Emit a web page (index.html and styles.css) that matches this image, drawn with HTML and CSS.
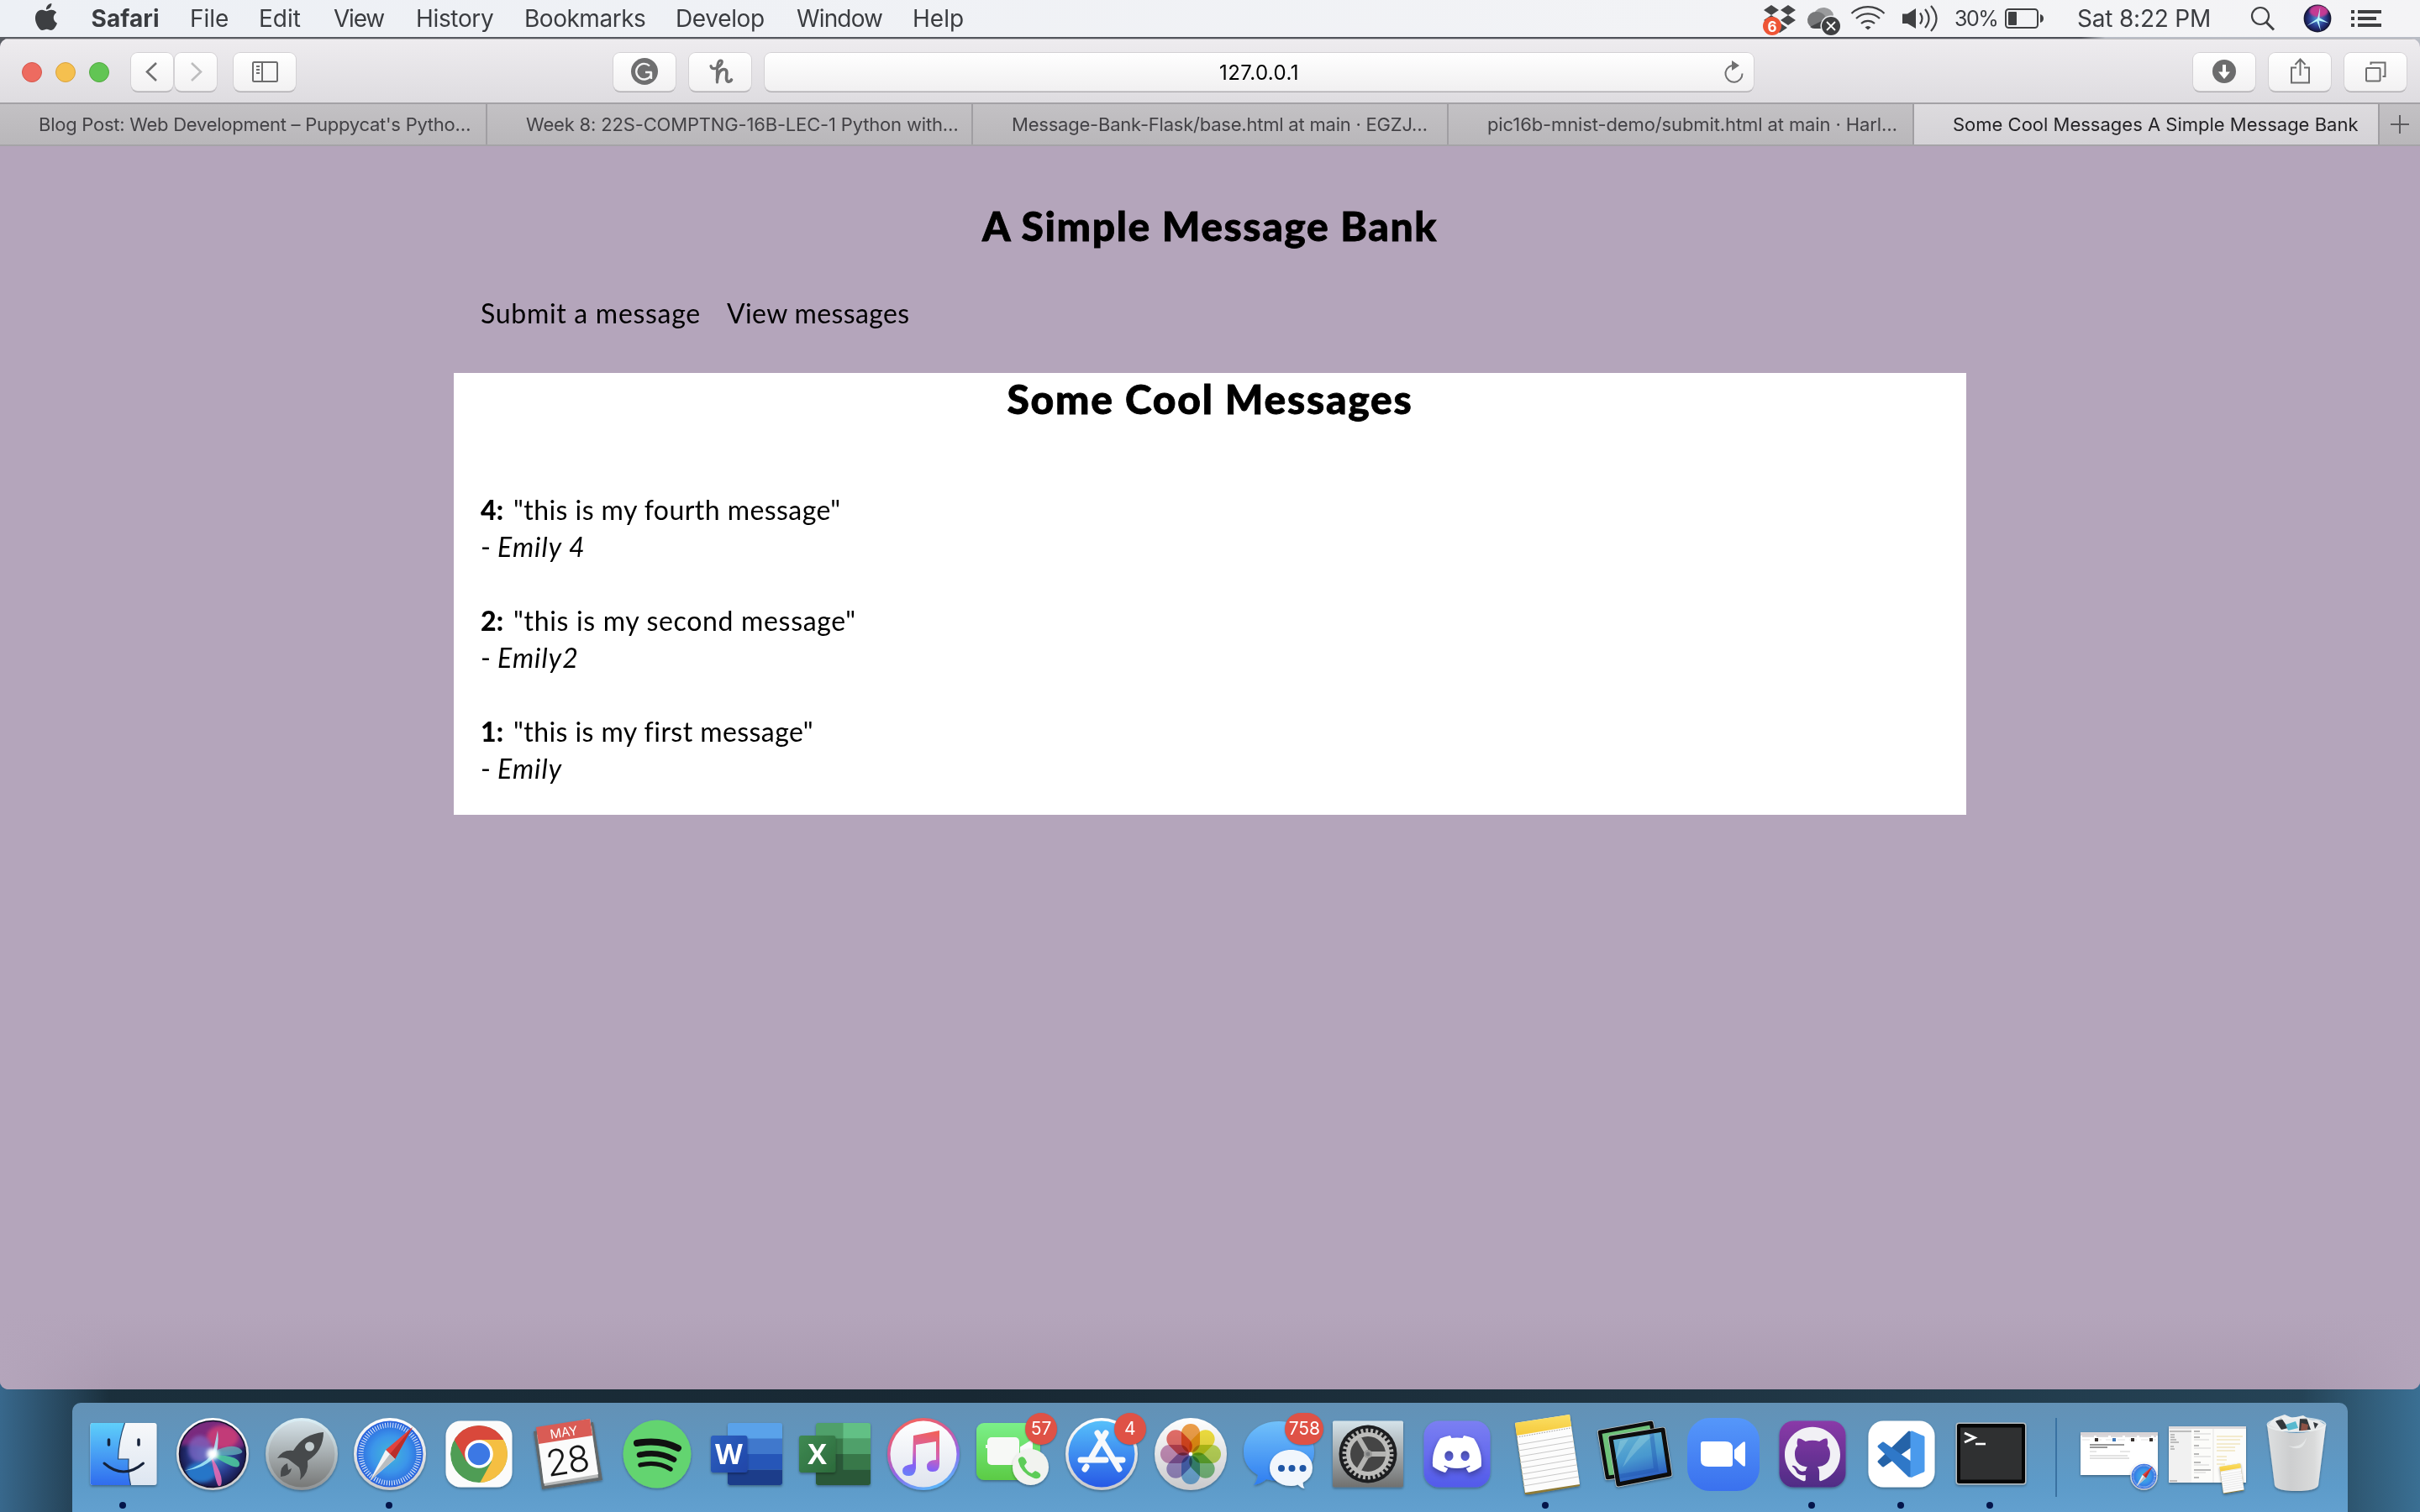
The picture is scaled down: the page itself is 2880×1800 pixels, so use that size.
FILE: index.html
```
<!DOCTYPE html>
<html lang="en">
<head>
<meta charset="utf-8">
<title>Some Cool Messages A Simple Message Bank</title>
<link rel="stylesheet" href="styles.css">
</head>
<body>
<svg class="defs" width="0" height="0" aria-hidden="true">
  <defs>
    <linearGradient id="rim" x2="0" y2="1"><stop offset="0" stop-color="#fff"/><stop offset="1" stop-color="#c9c9cb"/></linearGradient>
    <linearGradient id="finderBlue" x2="0" y2="1"><stop offset="0" stop-color="#5fd0fa"/><stop offset="1" stop-color="#2f6cee"/></linearGradient>
    <linearGradient id="finderWhite" x2="0" y2="1"><stop offset="0" stop-color="#f7f8fa"/><stop offset="1" stop-color="#dde6f1"/></linearGradient>
    <radialGradient id="siriBase" cx=".5" cy=".5" r=".55"><stop offset="0" stop-color="#4a9fd8"/><stop offset=".55" stop-color="#2b3f92"/><stop offset="1" stop-color="#120f38"/></radialGradient>
    <linearGradient id="rocket" x2="0" y2="1"><stop offset="0" stop-color="#d5e2e8"/><stop offset="1" stop-color="#777877"/></linearGradient>
    <linearGradient id="rocketRim" x2="0" y2="1"><stop offset="0" stop-color="#dcf0f7"/><stop offset="1" stop-color="#8f9294"/></linearGradient>
    <radialGradient id="compass"><stop offset="0" stop-color="#43b6d8"/><stop offset=".55" stop-color="#3b95ea"/><stop offset="1" stop-color="#2a62dc"/></radialGradient>
    <linearGradient id="wordTile" x2="1" y2="1"><stop offset="0" stop-color="#2f62c0"/><stop offset="1" stop-color="#1f45a8"/></linearGradient>
    <linearGradient id="excelTile" x2="1" y2="1"><stop offset="0" stop-color="#3f8a53"/><stop offset="1" stop-color="#2c6a3b"/></linearGradient>
    <linearGradient id="tunesRing" x1=".3" y1="0" x2=".7" y2="1"><stop offset="0" stop-color="#f5645a"/><stop offset=".35" stop-color="#d05aa0"/><stop offset=".65" stop-color="#8a6af0"/><stop offset="1" stop-color="#55c0fa"/></linearGradient>
    <linearGradient id="tunesNote" x1=".6" y1="0" x2=".4" y2="1"><stop offset="0" stop-color="#f0605c"/><stop offset=".5" stop-color="#d361b4"/><stop offset=".8" stop-color="#8462f5"/><stop offset="1" stop-color="#6a7cf8"/></linearGradient>
    <linearGradient id="tunesFace" x2="0" y2="1"><stop offset="0" stop-color="#fff"/><stop offset="1" stop-color="#dfe4ee"/></linearGradient>
    <linearGradient id="facetime" x2="0" y2="1"><stop offset="0" stop-color="#7bf089"/><stop offset="1" stop-color="#5bcb45"/></linearGradient>
    <linearGradient id="store" x2="0" y2="1"><stop offset="0" stop-color="#56c0fa"/><stop offset="1" stop-color="#2759e6"/></linearGradient>
    <linearGradient id="bubble" x2="0" y2="1"><stop offset="0" stop-color="#71c1fa"/><stop offset="1" stop-color="#2f7df0"/></linearGradient>
    <linearGradient id="prefs" x2="0" y2="1"><stop offset="0" stop-color="#d5e3ea"/><stop offset="1" stop-color="#70706f"/></linearGradient>
    <linearGradient id="discord" x2="0" y2="1"><stop offset="0" stop-color="#7b7ff2"/><stop offset="1" stop-color="#525aea"/></linearGradient>
    <linearGradient id="notesTop" x2="0" y2="1"><stop offset="0" stop-color="#fbdf64"/><stop offset="1" stop-color="#f5c93a"/></linearGradient>
    <linearGradient id="screen" x2=".3" y2="1"><stop offset="0" stop-color="#6bb9d2"/><stop offset=".6" stop-color="#4898cf"/><stop offset="1" stop-color="#2a5cc0"/></linearGradient>
    <linearGradient id="zoomBlue" x2="0" y2="1"><stop offset="0" stop-color="#5597fa"/><stop offset="1" stop-color="#3a71ee"/></linearGradient>
    <linearGradient id="github" x2="0" y2="1"><stop offset="0" stop-color="#8a3aa8"/><stop offset="1" stop-color="#4f2c85"/></linearGradient>
    <linearGradient id="can" x2="1"><stop offset="0" stop-color="#dddfe0"/><stop offset=".4" stop-color="#cdcecf"/><stop offset=".8" stop-color="#d9dada"/><stop offset="1" stop-color="#eff0f1"/></linearGradient>
    <filter id="soft" x="-50%" y="-50%" width="200%" height="200%"><feGaussianBlur stdDeviation="2.2"/></filter>
    <filter id="drop" x="-20%" y="-20%" width="140%" height="150%"><feDropShadow dx="0" dy="1.5" stdDeviation="1.5" flood-opacity=".35"/></filter>
    <clipPath id="siriClip"><circle r="39.5"/></clipPath>
    <clipPath id="chromeClip"><circle r="34"/></clipPath>
    <symbol id="compassIcon" viewBox="-44 -44 88 88">
      <circle r="43" fill="url(#rim)"/><circle r="39.5" fill="url(#compass)"/>
      <circle r="34.5" fill="none" stroke="#fff" stroke-opacity=".85" stroke-width="6" stroke-dasharray="1 2.01"/>
      <path d="M27-32L6 6-5-5z" fill="#e2433c"/><path d="M27-32L6 6 0 0z" fill="#bb2f2c"/>
      <path d="M-24 32L-5-5 6 6z" fill="#f4f4f4"/><path d="M-24 32L0 0 6 6z" fill="#b9bdc0"/>
    </symbol>
    <symbol id="notesIcon" viewBox="-41 -47 82 94">
      <path d="M-37-36L28-47 40 38-25 49z" fill="#8f7a35"/>
      <path d="M-37-37L28-47 40 36-25 46z" fill="#fcfcfc"/>
      <path d="M-37-37L28-47 30-33-35-22z" fill="url(#notesTop)"/>
      <path d="M-35-20L29-31" stroke="#999" stroke-dasharray="1.5 1.5"/>
      <path d="M-34-11L31-22M-33-4L32-15M-32 3L33-8M-31 10L34-1M-30 17L35 6M-29 24L36 13M-28 31L37 20M-27 38L38 27" stroke="#c9c9c9" stroke-width="1"/>
    </symbol>
  </defs>
</svg>

<header class="menubar">
  <svg class="apple" viewBox="0 0 24 24"><path fill="#3d3f42" d="M12.152 6.896c-.948 0-2.415-1.078-3.96-1.04-2.04.027-3.91 1.183-4.961 3.014-2.117 3.675-.546 9.103 1.519 12.09 1.013 1.454 2.208 3.09 3.792 3.039 1.52-.065 2.09-.987 3.935-.987 1.831 0 2.35.987 3.96.948 1.637-.026 2.676-1.48 3.676-2.948 1.156-1.688 1.636-3.325 1.662-3.415-.039-.013-3.182-1.221-3.22-4.857-.026-3.04 2.48-4.494 2.597-4.559-1.429-2.09-3.623-2.324-4.39-2.376-2-.156-3.675 1.09-4.61 1.09zM15.53 3.83c.843-1.012 1.4-2.427 1.245-3.83-1.207.052-2.662.805-3.532 1.818-.78.896-1.454 2.338-1.273 3.714 1.338.104 2.715-.688 3.559-1.701"/></svg>
  <span class="app-name">Safari</span>
  <span>File</span>
  <span>Edit</span>
  <span class="menu-view">View</span>
  <span class="menu-history">History</span>
  <span class="menu-bookmarks">Bookmarks</span>
  <span class="menu-develop">Develop</span>
  <span class="menu-window">Window</span>
  <span>Help</span>
  <svg width="40" height="44" viewBox="0 0 40 44"><path fill="#454648" d="M10 6l9 6-9 6-9-6zM30 6l9 6-9 6-9-6zM10 18l9 6-9 6-9-6zM30 18l9 6-9 6-9-6zM20 27l9 6-9 6-9-6z"/><circle cx="11" cy="31" r="11" fill="#ee5536"/><text x="11" y="37.500" class="tiny-badge">6</text></svg>
  <svg width="42" height="44" viewBox="0 0 42 44"><path d="M10 16a12 11 0 0 1 23 2l-8 10z" fill="#9a9b9d"/><path d="M11 34a10 10 0 1 1 2-20q6 0 10 5l6 15z" fill="#77787a"/><path d="M5 32l22-11 6 13H11q-4 0-6-2z" fill="#454648"/><circle cx="30" cy="31" r="12.500" fill="#f2f3f6"/><circle cx="30" cy="31" r="11" fill="#3f4042"/><path d="M25 26l10 10M35 26L25 36" stroke="#fff" stroke-width="1.800"/></svg>
  <svg width="42" height="44" viewBox="0 0 42 44" fill="none" stroke="#3f4042" stroke-width="2.200"><path d="M1.500 16a28 28 0 0 1 39 0M7 22a20 20 0 0 1 28 0M13 28a12 12 0 0 1 16 0"/><path d="M17.500 32.500q3.500-3 7 0L21 35.500z" fill="#3f4042" stroke="none"/></svg>
  <svg width="44" height="44" viewBox="0 0 44 44"><path d="M1 16.500h6L17 10v24L7 28H1z" fill="#3f4042"/><path d="M22 15.500q5 6.500 0 13M28 11q9 11 0 22M35 7q13 15 0 30" fill="none" stroke="#3f4042" stroke-width="2.200"/></svg>
  <span class="charge">30%</span>
  <svg width="48" height="44" viewBox="0 0 48 44"><rect x="2" y="11" width="38" height="22" rx="3.500" fill="none" stroke="#3f4042" stroke-width="2"/><rect x="5" y="14" width="10" height="16" rx="1" fill="#3f4042"/><path d="M43 17q4 1 4 5t-4 5z" fill="#3f4042"/></svg>
  <span class="clock">Sat 8:22 PM</span>
  <svg width="30" height="44" viewBox="0 0 30 44" fill="none" stroke="#3f4042"><circle cx="12" cy="19" r="10" stroke-width="2.200"/><path d="M19 26.500l9 9" stroke-width="3"/></svg>
  <svg width="34" height="44" viewBox="-17 -22 34 44"><g transform="scale(.4)"><circle r="41" fill="#15172e"/><g clip-path="url(#siriClip)"><circle r="38" fill="url(#siriBase)"/><ellipse cx="4" cy="-22" rx="28" ry="18" fill="#c43b93" filter="url(#soft)"/><path d="M-32 22L0 0 8-34 6-2 34 14 4 6 10 38-2 8z" fill="#b9f4fa"/></g></g></svg>
  <svg width="38" height="44" viewBox="0 0 38 44"><path d="M1 14h4M9 14h28M1 22h4M9 22h22M1 30h4M9 30h28" stroke="#3f4042" stroke-width="4"/></svg>
</header>

<main class="window">
  <div class="toolbar">
    <div class="lights"><i class="light red"></i><i class="light yellow"></i><i class="light green"></i></div>
    <div class="history-buttons">
      <div class="button narrow"><svg width="50" height="44" viewBox="0 0 50 44"><path d="M30 12L19 22.500 30 33" fill="none" stroke="#6f6f70" stroke-width="2.600"/></svg></div>
      <div class="button narrow"><svg width="50" height="44" viewBox="0 0 50 44"><path d="M20 12l11 10.500L20 33" fill="none" stroke="#bdbdbe" stroke-width="2.600"/></svg></div>
    </div>
    <div class="button"><svg width="74" height="44" viewBox="0 0 74 44" fill="none" stroke="#6c6c6d" stroke-width="2"><rect x="23" y="11" width="29" height="23" rx="1.500"/><path d="M34 11v23M27 16h4M27 20h4M27 24h4"/></svg></div>
    <div class="spacer left"></div>
    <div class="button"><svg width="74" height="44" viewBox="0 0 74 44"><circle cx="37" cy="22" r="16" fill="#6f6f70"/><path d="M43 15.500a9.300 9.300 0 1 0 1.500 11.500V23H38M45 23v8" fill="none" stroke="#f5f5f5" stroke-width="2.400"/></svg></div>
    <div class="button"><svg width="74" height="44" viewBox="0 0 74 44" fill="none" stroke="#6f6f70" stroke-linecap="round" stroke-linejoin="round"><path d="M26 15.500c1 5 7 3.500 10.500 0 3.500-3 3.500-6.500 1-6.500-3.500 0-4 6-4 13V35" stroke-width="3.200"/><path d="M33.500 32c1-8 4-12.500 8-12.500 5 0 3 6 3 10.500 0 5 4 5.500 6 2" stroke-width="3.600"/></svg></div>
    <div class="address"><span>127.0.0.1</span><svg width="30" height="44" viewBox="0 0 30 44"><path d="M13 13a10 10 0 1 0 12.500 9.500" fill="none" stroke="#707071" stroke-width="2"/><path d="M13 7l9 6-9 6z" fill="#707071"/></svg></div>
    <div class="spacer right"></div>
    <div class="button"><svg width="74" height="44" viewBox="0 0 74 44"><circle cx="37" cy="22" r="14" fill="#6c6c6d"/><path d="M37 14v12" stroke="#fff" stroke-width="4"/><path d="M30 22.500h14L37 31z" fill="#fff"/></svg></div>
    <div class="button"><svg width="74" height="44" viewBox="0 0 74 44" fill="none" stroke="#6c6c6d" stroke-width="2"><path d="M33 17.500h-6v18h21v-18h-6M37.500 27V8M31.500 14l6-6.500 6 6.500"/></svg></div>
    <div class="button"><svg width="74" height="44" viewBox="0 0 74 44" fill="none" stroke="#6c6c6d" stroke-width="2"><rect x="26" y="18" width="16.500" height="15.500" rx="1"/><path d="M31.500 14v-2.500h17V28h-3"/></svg></div>
  </div>

  <nav class="tabs">
    <div class="tab t1">Blog Post: Web Development – Puppycat's Pytho…</div>
    <div class="tab t2">Week 8: 22S-COMPTNG-16B-LEC-1 Python with…</div>
    <div class="tab t3">Message-Bank-Flask/base.html at main · EGZJ…</div>
    <div class="tab t4">pic16b-mnist-demo/submit.html at main · Harl…</div>
    <div class="tab active">Some Cool Messages A Simple Message Bank</div>
    <div class="new-tab"><svg width="26" height="26" viewBox="0 0 26 26"><path d="M13 2v22M2 13h22" stroke="#5c5b5e" stroke-width="2"/></svg></div>
  </nav>

  <article class="page">
    <h1>A Simple Message Bank</h1>
    <div class="links"><a class="submit">Submit a message</a><a class="view">View messages</a></div>
    <section class="card">
      <h2>Some Cool Messages</h2>
      <div class="messages">
        <div class="message"><p class="m4"><b>4:</b>"this is my fourth message"</p><p>- <em>Emily 4</em></p></div>
        <div class="message"><p class="m2"><b>2:</b>"this is my second message"</p><p>- <em>Emily2</em></p></div>
        <div class="message"><p class="m1"><b>1:</b>"this is my first message"</p><p>- <em>Emily</em></p></div>
      </div>
    </section>
  </article>
</main>

<footer class="dock">
  <div class="slot running"><svg viewBox="-53 -61 106 130"><g filter="url(#drop)"><rect x="-39.500" y="-37" width="79" height="74" rx="3" fill="url(#finderWhite)"/><path d="M-36.500-37H1.500Q-6-16-6.500 6H6Q5 22 8.500 37h-45a3 3 0 0 1-3-3v-68a3 3 0 0 1 3-3z" fill="url(#finderBlue)"/></g><path d="M1.500-37Q-6-16-6.500 6H6Q5 22 8.500 37" fill="none" stroke="#24476f" stroke-width="1.200"/><path d="M-17.500-17v6M18-17v6" stroke="#15223a" stroke-width="3.500" stroke-linecap="round"/><path d="M-23 11Q0 31 23.500 11" fill="none" stroke="#15223a" stroke-width="3" stroke-linecap="round"/></svg></div>
  <div class="slot"><svg viewBox="-53 -61 106 130"><circle r="43" fill="url(#rim)" filter="url(#drop)"/><g clip-path="url(#siriClip)"><circle r="39.500" fill="url(#siriBase)"/><path d="M-39-10A40 40 0 0 1 39-10Q20 0 0-6T-39-10z" fill="#7a2a7e" filter="url(#soft)"/><ellipse cx="12" cy="-20" rx="19" ry="14" fill="#c23a78" filter="url(#soft)"/><ellipse cx="-15" cy="-6" rx="14" ry="16" fill="#8267c4" opacity=".7" filter="url(#soft)"/><ellipse cx="-14" cy="22" rx="18" ry="12" fill="#2876c8" filter="url(#soft)"/><path d="M0-2Q22-14 33-6T4 2z" fill="#62aeb9" opacity=".8"/><path d="M2 1Q32 2 32 12T2 3z" fill="#4cc79c" opacity=".9"/><path d="M-2 2Q14 26 10 37T-2 2z" fill="#e46bb4" opacity=".9"/><path d="M-34 20Q-12 14 0 0 4-18 6-28 8-12 4 0-4 16-34 20z" fill="#a8effa" opacity=".85"/><circle r="7" fill="#fff" filter="url(#soft)"/></g><circle r="39.500" fill="none" stroke="#14102c" stroke-width="1.500"/></svg></div>
  <div class="slot"><svg viewBox="-53 -61 106 130"><circle r="43" fill="url(#rocketRim)" filter="url(#drop)"/><circle r="39.500" fill="url(#rocket)"/><path d="M26-26Q2-24-10-4-22-6-29 5-22 3-16 6l13 10Q0 24-2 31 9 22 7 8 26-4 26-26z" fill="#46494b"/><circle cx="9.500" cy="-9" r="5.500" fill="#c3cdd0"/><path d="M-17 11Q-26 14-25 27-13 26-12 17l-4 2z" fill="#46494b"/></svg></div>
  <div class="slot running"><svg viewBox="-53 -61 106 130"><use href="#compassIcon" x="-44" y="-44" width="88" height="88" filter="url(#drop)"/></svg></div>
  <div class="slot"><svg viewBox="-53 -61 106 130"><rect x="-39.500" y="-39.500" width="79" height="79" rx="18" fill="#fbfbfb" filter="url(#drop)"/><g clip-path="url(#chromeClip)"><circle r="34" fill="#4f9d55"/><path d="M-40-40H40V-17H0L-15 9-31-20z" fill="#d9483b"/><path d="M0-17H40V40H-2L15 9z" fill="#f5bf42"/></g><circle r="16.800" fill="#fff"/><circle r="13.200" fill="#3c78e4"/></svg></div>
  <div class="slot"><svg viewBox="-53 -61 106 130"><g filter="url(#drop)"><path d="M-41-27L30-38 41 31-31 42z" fill="#62676a"/><path d="M-37-23L28-33 36 28-28 38z" fill="#b9bbbb"/><path d="M-37-30L26-42 36 24-29 35z" fill="#fbfbfb"/><path d="M-38-32L26-42 29-22-35-12z" fill="#d95c55"/></g><g transform="rotate(-9)" text-anchor="middle"><text class="cal-month" x="-1" y="-21">MAY</text><text class="cal-day" x="-2" y="23">28</text></g></svg></div>
  <div class="slot"><svg viewBox="-53 -61 106 130"><circle r="40.500" fill="#64d470" filter="url(#drop)"/><g fill="none" stroke="#111" stroke-linecap="round"><path d="M-24-13Q4-18 25-7" stroke-width="8"/><path d="M-21 1Q2-4 20 6.500" stroke-width="6.600"/><path d="M-20 13Q0 8 16 18" stroke-width="5.400"/></g></svg></div>
  <div class="slot"><svg viewBox="-53 -61 106 130"><g filter="url(#drop)"><rect x="-22" y="-37" width="65" height="74" rx="3" fill="#5aa2ea"/><path d="M-22-18.500h65V0h-65z" fill="#3f78cc"/><path d="M-22 0h65v18.500h-65z" fill="#2857b8"/><path d="M-22 18.500h65V34a3 3 0 0 1-3 3h-59a3 3 0 0 1-3-3z" fill="#1c3d8a"/></g><rect x="-42" y="-22" width="43.500" height="44" rx="3" fill="url(#wordTile)" filter="url(#drop)"/><text class="office" x="-20.500" y="12">W</text></svg></div>
  <div class="slot"><svg viewBox="-53 -61 106 130"><g filter="url(#drop)"><rect x="-22" y="-37" width="65" height="74" rx="3" fill="#4fa06a"/><path d="M10.500-37H40a3 3 0 0 1 3 3v15.500H10.500z" fill="#62c085"/><path d="M-22-18.500h32.500V18.500H-22z" fill="#37784a"/><path d="M10.500-18.500H43V0H10.500z" fill="#4fa06a"/><path d="M10.500 0H43v18.500H10.500z" fill="#37784a"/><path d="M-22 18.500h65V34a3 3 0 0 1-3 3h-59a3 3 0 0 1-3-3z" fill="#2b5838"/><path d="M-22 0h32.500v20H-22z" fill="#2b5838"/></g><rect x="-42" y="-22" width="43.500" height="44" rx="3" fill="url(#excelTile)" filter="url(#drop)"/><text class="office" x="-20.500" y="12">X</text></svg></div>
  <div class="slot"><svg viewBox="-53 -61 106 130"><circle r="43" fill="url(#tunesRing)" filter="url(#drop)"/><circle r="39.500" fill="url(#tunesFace)"/><path d="M-12-22L19-28V12q0 9-8 9-7 0-7-6 0-8 11-8V-15l-24 4V17q-1 9-8 9-8 0-8-6 0-7 12-8z" fill="url(#tunesNote)"/></svg></div>
  <div class="slot"><svg viewBox="-53 -61 106 130"><rect x="-43" y="-37" width="76" height="68" rx="9" fill="url(#facetime)" filter="url(#drop)"/><path d="M-31-11v4M10-8L23-16V10L10 2z" fill="#fafafa" stroke="#fafafa" stroke-width="2"/><rect x="-30" y="-20" width="38" height="33" rx="5" fill="#f7f9f6"/><circle cx="21.500" cy="15.500" r="21.500" fill="#f1f3ef" filter="url(#drop)"/><path d="M9 4q5-3 8 6l-3 4q3 7 9 9l4-3q8 3 6 7-3 4-9 1-14-6-17-19-1-3 2-5z" fill="#5dcc58"/></svg><span class="badge">57</span></div>
  <div class="slot"><svg viewBox="-53 -61 106 130"><circle r="43" fill="url(#rim)" filter="url(#drop)"/><circle r="39.500" fill="url(#store)"/><g stroke="#f7f9fb" stroke-width="7" stroke-linecap="round"><path d="M-25 7H5M17 7h8M-5-25L21 18M5-25L-12 4M-18 15l-2 3"/></g></svg><span class="badge">4</span></div>
  <div class="slot"><svg viewBox="-53 -61 106 130"><circle r="43" fill="url(#rim)" filter="url(#drop)"/><g class="petals"><rect x="-11" y="-36" width="22" height="34" rx="11" fill="#f0a04a"/><rect x="-11" y="-36" width="22" height="34" rx="11" fill="#f3e240" transform="rotate(45)"/><rect x="-11" y="-36" width="22" height="34" rx="11" fill="#c0dc5a" transform="rotate(90)"/><rect x="-11" y="-36" width="22" height="34" rx="11" fill="#7fc684" transform="rotate(135)"/><rect x="-11" y="-36" width="22" height="34" rx="11" fill="#76b6e6" transform="rotate(180)"/><rect x="-11" y="-36" width="22" height="34" rx="11" fill="#a192cc" transform="rotate(225)"/><rect x="-11" y="-36" width="22" height="34" rx="11" fill="#cb93bd" transform="rotate(270)"/><rect x="-11" y="-36" width="22" height="34" rx="11" fill="#e8706a" transform="rotate(315)"/></g><circle r="2" fill="#fff"/></svg></div>
  <div class="slot"><svg viewBox="-53 -61 106 130"><path d="M0-39C-24-39-42-23-42-3q0 18 17 28-1 7-5 12 10-2 15-7 7 2 15 2c24 0 42-15 42-35S24-39 0-39z" fill="url(#bubble)" filter="url(#drop)"/><path d="M14.500-5C-1-5-11 5-11 16.500S0 38 14.500 38q4 0 8-1.500 4 4 8 4.500-2-3-2-7Q40 28 40 16.500C40 4 29-5 14.500-5z" fill="#f1f6fc" filter="url(#drop)"/><g fill="#1f56a5"><circle cx="3" cy="17" r="4"/><circle cx="15.500" cy="17" r="4"/><circle cx="28.500" cy="17" r="4"/></g></svg><span class="badge wide">758</span></div>
  <div class="slot"><svg viewBox="-53 -61 106 130"><rect x="-42" y="-39.500" width="84" height="79" rx="2" fill="url(#prefs)" filter="url(#drop)"/><circle r="34.500" fill="#1d1e20"/><circle r="28" fill="none" stroke="#b4b4b2" stroke-width="5" stroke-dasharray="3 2.864"/><circle r="23.500" fill="#454545" stroke="#bdbdbb" stroke-width="5"/><path d="M0 0H22M0 0L-11-19M0 0L-11 19" stroke="#b4b4b2" stroke-width="6"/><circle r="5" fill="#9b9b99"/><circle r="2.500" fill="#77797a"/></svg></div>
  <div class="slot"><svg viewBox="-53 -61 106 130"><rect x="-39.500" y="-39.500" width="79" height="79" rx="18" fill="url(#discord)" filter="url(#drop)"/><path transform="translate(-29 -29) scale(2.417)" fill="#fff" filter="url(#drop)" d="M20.317 4.370a19.791 19.791 0 00-4.885-1.515.074.074 0 00-.079.037c-.211.375-.445.865-.608 1.250-1.845-.276-3.680-.276-5.487 0-.164-.393-.406-.874-.618-1.250a.077.077 0 00-.079-.037 19.736 19.736 0 00-4.885 1.515.070.070 0 00-.032.028C.533 9.046-.319 13.580.099 18.058a.082.082 0 00.031.056c2.053 1.508 4.041 2.423 5.993 3.029a.078.078 0 00.084-.028c.462-.630.873-1.295 1.226-1.994a.076.076 0 00-.042-.106c-.653-.248-1.274-.550-1.872-.892a.077.077 0 01-.008-.128c.126-.094.252-.192.372-.291a.074.074 0 01.078-.011c3.928 1.793 8.180 1.793 12.061 0a.074.074 0 01.079.010c.120.099.246.198.373.292a.077.077 0 01-.007.128 12.299 12.299 0 01-1.873.891.077.077 0 00-.041.107c.360.698.772 1.363 1.225 1.993a.076.076 0 00.084.029c1.961-.607 3.950-1.522 6.002-3.029a.077.077 0 00.031-.055c.500-5.177-.838-9.674-3.549-13.660a.061.061 0 00-.031-.029zM8.020 15.331c-1.183 0-2.157-1.086-2.157-2.419 0-1.333.956-2.419 2.157-2.419 1.211 0 2.176 1.095 2.157 2.419 0 1.333-.956 2.419-2.157 2.419zm7.975 0c-1.183 0-2.157-1.086-2.157-2.419 0-1.333.955-2.419 2.157-2.419 1.211 0 2.176 1.095 2.157 2.419 0 1.333-.946 2.419-2.157 2.419z"/></svg></div>
  <div class="slot running"><svg viewBox="-53 -61 106 130"><use href="#notesIcon" x="-41" y="-48" width="82" height="96" filter="url(#drop)"/></svg></div>
  <div class="slot"><svg viewBox="-53 -61 106 130"><g filter="url(#drop)" stroke-linejoin="round"><path d="M-42-26L19-37 30 19-33 28z" fill="#6ec27a" stroke="#bfc5c5" stroke-width="6"/><path d="M-42-26L19-37 30 19-33 28z" fill="#6ec27a" stroke="#0c0c0c" stroke-width="4.500"/><path d="M-29-19L33-29 41 24-20 36z" fill="url(#screen)" stroke="#bfc5c5" stroke-width="6.500"/><path d="M-29-19L33-29 41 24-20 36z" fill="url(#screen)" stroke="#0c0c0c" stroke-width="5"/></g><path d="M-15 16Q2-6 23-24L6-21Q-8-4-15 16zM-18-16L-24 8-8-18z" fill="#b4e6e4" opacity=".3"/><path d="M22-25l6 46-46 8-1-5 41-7-5-41z" fill="#1e4fae" opacity=".4"/></svg></div>
  <div class="slot"><svg viewBox="-53 -61 106 130"><rect x="-43" y="-43" width="86" height="87" rx="27" fill="url(#zoomBlue)"/><path d="M-27-12q0-3 3-3H2q9 0 9 8V12q0 3-3 3H-18q-9 0-9-8zM13-5L23-14q3-2 3 1V13q0 3-3 1L13 5z" fill="#fff"/></svg></div>
  <div class="slot running"><svg viewBox="-53 -61 106 130"><rect x="-39.500" y="-39.500" width="79" height="79" rx="17" fill="url(#github)" filter="url(#drop)"/><path transform="translate(-33 -33) scale(2.750)" fill="#f1f0f5" d="M12 .297c-6.630 0-12 5.373-12 12 0 5.303 3.438 9.800 8.205 11.385.600.113.820-.258.820-.577 0-.285-.010-1.040-.015-2.040-3.338.724-4.042-1.610-4.042-1.610C4.422 18.070 3.633 17.700 3.633 17.700c-1.087-.744.084-.729.084-.729 1.205.084 1.838 1.236 1.838 1.236 1.070 1.835 2.809 1.305 3.495.998.108-.776.417-1.305.760-1.605-2.665-.300-5.466-1.332-5.466-5.930 0-1.310.465-2.380 1.235-3.220-.135-.303-.540-1.523.105-3.176 0 0 1.005-.322 3.300 1.230.960-.267 1.980-.399 3-.405 1.020.006 2.040.138 3 .405 2.280-1.552 3.285-1.230 3.285-1.230.645 1.653.240 2.873.120 3.176.765.840 1.230 1.910 1.230 3.220 0 4.610-2.805 5.625-5.475 5.920.420.360.810 1.096.810 2.220 0 1.606-.015 2.896-.015 3.286 0 .315.210.690.825.570C20.565 22.092 24 17.592 24 12.297c0-6.627-5.373-12-12-12"/></svg></div>
  <div class="slot running"><svg viewBox="-53 -61 106 130"><rect x="-39.500" y="-39.500" width="79" height="79" rx="18" fill="#fff" filter="url(#drop)"/><g stroke-linejoin="round" stroke-width="3"><path d="M-27 9L9-26 12-24V-10L-22 14z" fill="#2563a8" stroke="#2563a8"/><path d="M-27-9L-22-13 12 11V26H9z" fill="#2f78c8" stroke="#2f78c8"/><path d="M12-26l14 6v40l-14 6z" fill="#4a9aec" stroke="#4a9aec"/></g></svg></div>
  <div class="slot running"><svg viewBox="-53 -61 106 130"><rect x="-41.500" y="-37.500" width="84" height="74" rx="4" fill="#b5bcc0" filter="url(#drop)"/><rect x="-40" y="-36" width="81" height="71" rx="2.500" fill="#060606"/><rect x="-36" y="-31.500" width="73" height="62" fill="#2f3031"/><path d="M-31-25l12 5.500L-31-14" fill="none" stroke="#fff" stroke-width="3"/><path d="M-18-12H-6" stroke="#fff" stroke-width="2.600"/></svg></div>
  <div class="separator"></div>
  <div class="slot"><svg viewBox="-53 -61 106 130"><rect x="-46" y="-26" width="92" height="51" fill="#fff" filter="url(#drop)"/><path d="M-46-26h92v4h-92z" fill="#d7d3d6"/><path d="M-44-21h88" stroke="#b9b7ba" stroke-width="1" stroke-dasharray="14 3"/><path d="M-44-17h88" stroke="#e3e3e3" stroke-dasharray="9 5"/><g><path d="M-29-19h4v4h-4zM14-19h4v4h-4zM36-19h4v4h-4z" fill="#38322f"/><path d="M-8-19h4v4h-4z" fill="#3f78ba"/></g><path d="M-35-11H6M-35-8H-14" stroke="#777" stroke-width="1.500"/><path d="M-35-3h8M1-3h12" stroke="#ccc"/><path d="M-35 2H10M-35 5H12" stroke="#c4c4c4"/><use href="#compassIcon" x="13" y="10" width="33" height="33" filter="url(#drop)"/></svg></div>
  <div class="slot"><svg viewBox="-53 -61 106 130"><rect x="-46" y="-33" width="92" height="67" fill="#fcfcfa" filter="url(#drop)"/><path d="M-46-33h92v3h-92z" fill="#dcdadc"/><path d="M-46-30h27v64h-27z" fill="#f1f1f1"/><path d="M-45-27h26" stroke="#bdbdbd" stroke-width="2"/><path d="M-44-23h5M-44-20h5M-44-17h7M-44-14h10M-44-9h4M-44-6h5M-45 32h9" stroke="#888"/><path d="M-16-27h7M-16-20h7M-16-10h6M-16 0h6M-16 10h8M-16 19h20M-16 28h6" stroke="#777" stroke-width="1.100"/><path d="M-16-24h20M-16-17h18M-16-7h20M-16 3h20M-16 13h18M-16 22h14" stroke="#d3d3d3" stroke-width="1"/><path d="M7-30v64" stroke="#e3e3e3"/><path d="M11-21h31M11-17h28M11-12h28M11-8h22M11-4h22M11 3h12M11 7h12M11 12h10" stroke="#ead9a2" stroke-width="1.200"/><use href="#notesIcon" x="13" y="11" width="31" height="36" filter="url(#drop)"/></svg></div>
  <div class="slot"><svg viewBox="-53 -61 106 130"><path d="M-34-35L-26-43-14-47-5-43 8-46 16-41 26-40 34-35 26-27H-26z" fill="#e9ebec"/><path d="M-25-39l7-4 8 12-8 2zM4-42l8-1 5 14-14 2zM20-38l6 2-4 6z" fill="#33383c"/><path d="M-13-35l12-4 3 8-12 3z" fill="#59b9cf"/><path d="M6-37l8 2-1 6-8 2z" fill="#8c5145"/><path d="M-35-35Q0-15 35-35L26 37Q24 44 0 44T-26 37z" fill="url(#can)" filter="url(#drop)"/><ellipse cy="-35" rx="34.500" ry="8" fill="none" stroke="#eef1f2" stroke-width="2" opacity=".75"/><path d="M-10-10Q6-6 12-20 8 0-10-10z" fill="#e9ebeb" opacity=".8"/></svg></div>
</footer>
</body>
</html>
```
FILE: styles.css
```
* { box-sizing: border-box; }

body {
  margin: 0;
  width: 2880px;
  height: 1800px;
  overflow: hidden;
  display: flex;
  flex-direction: column;
  font-family: Inter, "Liberation Sans", sans-serif;
  background:
    linear-gradient(90deg, #38688c 0, rgba(56, 104, 140, 0) 130px, rgba(56, 104, 140, 0) 2740px, #3a6f93 2880px) 0 1600px no-repeat,
    linear-gradient(90deg, #1b303d 0, #182833 40%, #1f3442 70%, #26465a 100%) 0 100px no-repeat,
    linear-gradient(90deg, #5a5d63 0, #4d5058 86%, #b9bdc5 87%) #4d5058;
}

.defs { position: absolute; }
svg { display: block; overflow: visible; }

/* Menu bar */
.menubar {
  height: 44px;
  flex: none;
  padding-left: 43px;
  display: grid;
  grid-template-columns: 65.5px 117.500px 82px 89px 98px 129px 180px 144px 138px 1012px 51px 53px 61px 63px 59px 87px 206px 63px 56px 83px;
  align-items: center;
  background: linear-gradient(90deg, #edf0f5, #f4f4f6);
  color: #3a3c40;
  font-size: 28px;
  line-height: 44px;
  white-space: nowrap;
}
.apple { width: 32px; height: 32px; margin: -4px 0 0 -4px; }
.app-name { font-weight: 700; letter-spacing: 0.1px; }
.menu-view { letter-spacing: -1.200px; }
.menu-history { letter-spacing: -0.340px; }
.menu-bookmarks { letter-spacing: -0.480px; }
.menu-develop { letter-spacing: -0.340px; }
.menu-window { letter-spacing: -0.850px; }
.charge { font-size: 25px; letter-spacing: -1.500px; }
.clock { letter-spacing: -0.200px; }
.tiny-badge { font: 700 17px Inter, sans-serif; fill: #fff; text-anchor: middle; }

/* Browser window */
.window {
  flex: none;
  height: 1608px;
  margin-top: 2px;
  border-radius: 10px;
  overflow: hidden;
  display: flex;
  flex-direction: column;
  background: #b4a5bb;
}
.toolbar {
  height: 78px;
  flex: none;
  display: flex;
  align-items: flex-start;
  padding: 17px 16px 0 26px;
  border-bottom: 2px solid #a3a1a5;
  background: linear-gradient(#eeecef, #dedce0);
  box-shadow: inset 0 1px #bdbbbe;
}
.lights { display: flex; gap: 16px; padding-top: 11px; margin-right: 26px; }
.light { width: 24px; height: 24px; border-radius: 50%; border: 1px solid; }
.red { background: #ed6b60; border-color: #d5564c; }
.yellow { background: #f5c04f; border-color: #d8a13c; }
.green { background: #62c554; border-color: #52a93f; }
.button {
  width: 74px;
  height: 45px;
  flex: none;
  border-radius: 8px;
  background: linear-gradient(#fff, #f2f1f2);
  box-shadow: 0 0 0 1px #d3d1d4, 0 2px 0 #aeacaf;
  margin-right: 16px;
}
.button:last-child { margin-right: 0; }
.history-buttons { display: flex; gap: 2px; margin-right: 20px; }
.button.narrow { width: 50px; margin: 0; }
.spacer.left { flex: 0 0 362px; }
.spacer.right { flex: 1; }
.address {
  width: 1177px;
  height: 45px;
  flex: none;
  display: flex;
  align-items: center;
  padding: 2px 9px 0 541px;
  justify-content: space-between;
  border-radius: 8px;
  background: linear-gradient(#fff, #f1f0f1);
  box-shadow: 0 0 0 1px #d3d1d4, 0 2px 0 #aeacaf;
  color: #000;
  font-size: 24px;
  letter-spacing: 0.400px;
}

/* Tabs */
.tabs {
  height: 50px;
  flex: none;
  display: grid;
  grid-template-columns: 580px 578px 566px 554px 554px 48px;
  line-height: 48px;
  font-size: 22px;
  white-space: nowrap;
  color: #434246;
  border-bottom: 2px solid #a5a3a7;
  background: linear-gradient(#c3c1c4, #b9b7ba);
}
.tab { border-right: 2px solid #a09ea2; padding-left: 46px; }
.t1 { letter-spacing: -0.260px; }
.t2 { letter-spacing: -0.170px; }
.t3 { letter-spacing: -0.220px; }
.t4 { letter-spacing: -0.110px; }
.active { background: linear-gradient(#dddbde, #d4d2d6); color: #242326; }
.new-tab { display: grid; place-items: center; }

/* Message bank page */
.page {
  flex: 1;
  padding-top: 65px;
  font-family: Lato, sans-serif;
  color: #000;
  background:
    linear-gradient(90deg, #b4a5bb 0, rgba(180, 165, 187, 0) 140px, rgba(180, 165, 187, 0) 2740px, #b4a5bb) 0 100% / 100% 90px no-repeat,
    linear-gradient(rgba(172, 156, 178, 0), #ab9bb1) 0 100% / 100% 90px no-repeat;
}
h1, h2, p { margin: 0; }
h1, h2 { -webkit-text-stroke: 0.800px #000; }
h1 {
  font-size: 48px;
  line-height: 60px;
  font-weight: 900;
  letter-spacing: 1.580px;
  text-align: center;
}
.links {
  display: flex;
  margin: 52px 0 49px 572px;
  font-size: 32px;
  line-height: 44px;
}
.submit { width: 293px; letter-spacing: 0.700px; }
.view { letter-spacing: 0.370px; }
.card {
  width: 1800px;
  margin: 0 auto;
  padding: 2px 32px 33px;
  background: #fff;
}
h2 {
  font-size: 48px;
  line-height: 58px;
  font-weight: 900;
  letter-spacing: 1.750px;
  text-align: center;
}
.messages {
  display: flex;
  flex-direction: column;
  gap: 44px;
  padding-top: 81px;
  font-size: 32px;
  line-height: 44px;
}
.messages b { display: inline-block; width: 39px; font-weight: 900; letter-spacing: 0.3px; }
.messages em { letter-spacing: 1.050px; }
.m4 { letter-spacing: 0.440px; }
.m2 { letter-spacing: 0.670px; }
.m1 { letter-spacing: 0.430px; }

/* Dock */
.dock {
  flex: none;
  width: 2708px;
  height: 130px;
  margin: 16px 0 0 86px;
  padding-left: 8px;
  display: flex;
  border-radius: 10px 10px 0 0;
  background: linear-gradient(#6391b5, #5d9bc9 75%, #62a0cf);
}
.slot { width: 105.800px; height: 130px; flex: none; position: relative; }
.slot > svg { width: 106px; height: 130px; }
.running::after {
  content: "";
  position: absolute;
  left: 48px;
  bottom: 4px;
  width: 8px;
  height: 8px;
  border-radius: 50%;
  background: #04154a;
}
.separator { width: 2px; height: 94px; margin: 18px 21px 0 24px; background: #3a72a2; }
.badge {
  position: absolute;
  left: 68px;
  top: 12px;
  width: 38px;
  height: 38px;
  border-radius: 19px;
  background: #df5246;
  color: #fff;
  font-size: 21px;
  line-height: 38px;
  text-align: center;
  box-shadow: 0 1px 2px rgba(0, 0, 0, 0.3);
}
.badge.wide { left: 60px; width: 46px; }
.cal-month { font: 400 15px Inter, sans-serif; fill: #fff; }
.cal-day { font: 300 43px Inter, sans-serif; fill: #161616; letter-spacing: -1px; }
.office { font: 700 34px "Open Sans", sans-serif; fill: #fff; text-anchor: middle; }
.petals rect { mix-blend-mode: multiply; }
```
